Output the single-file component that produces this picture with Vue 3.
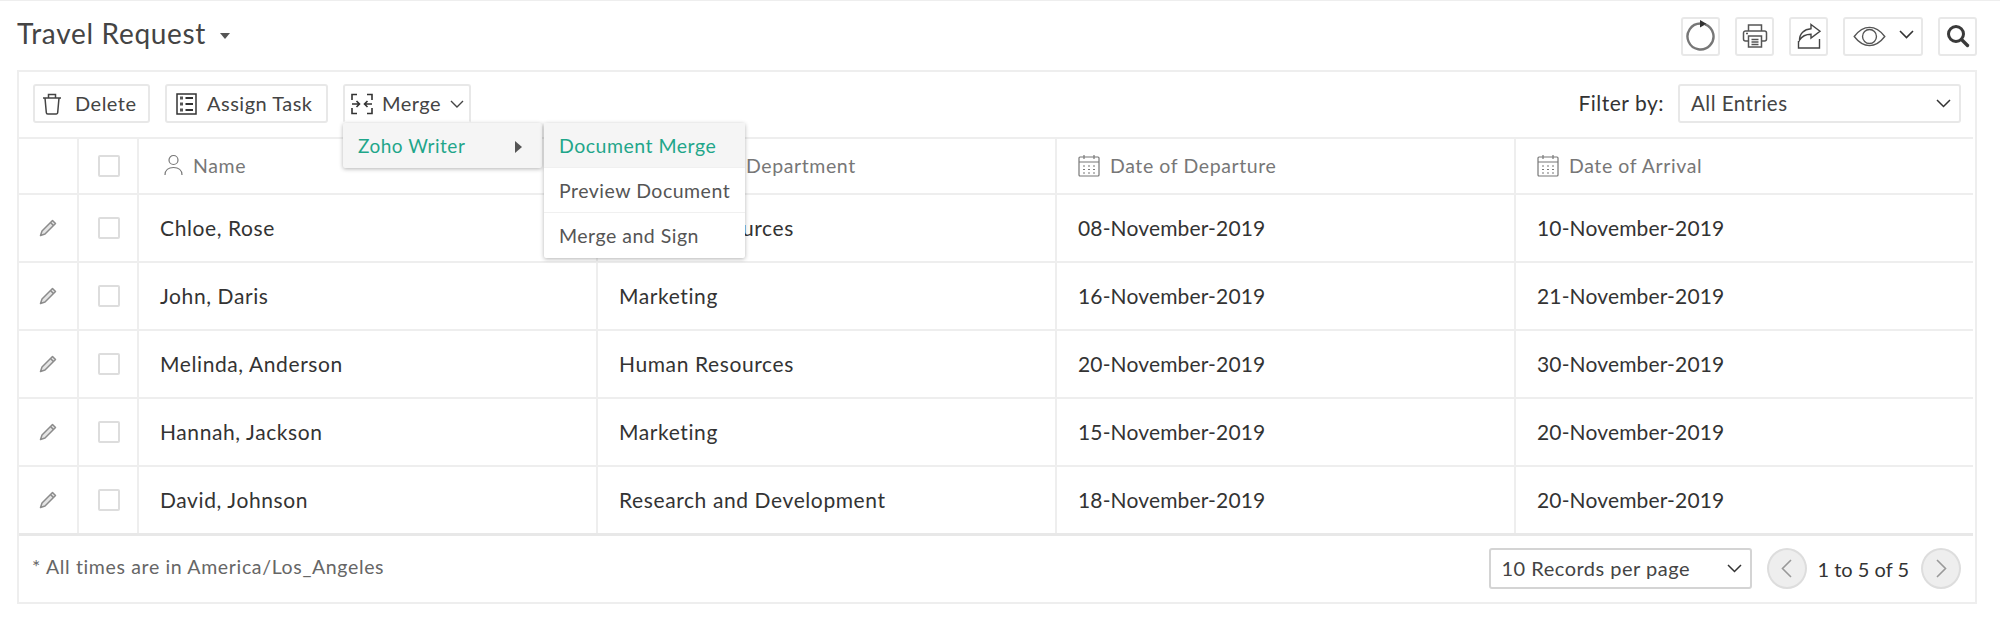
<template>
  <div class="page">
    <header class="topbar">
      <div class="title">
        <span>Travel Request</span>
        <i class="caret"></i>
      </div>
      <div class="top-actions">
        <button class="icon-btn">
          <svg width="32" height="32" viewBox="0 0 32 32" fill="none">
            <path d="M20 4.300A13 13 0 1 1 15.500 3.500" stroke="#777" stroke-width="2.400" />
            <path d="M15 0l6.500 3.700L15 7.400z" fill="#333" />
          </svg>
        </button>
        <button class="icon-btn">
          <svg width="26" height="26" viewBox="0 0 26 26" fill="none" stroke="#555" stroke-width="1.500">
            <path d="M6.500 8V2h13v6" />
            <path d="M6 18H3.500a2 2 0 0 1-2-2v-6a2 2 0 0 1 2-2h19a2 2 0 0 1 2 2v6a2 2 0 0 1-2 2H20" />
            <path d="M6.500 13h13v11h-13z" />
            <path d="M9.500 16.500h7M9.500 19h7M9.500 21.500h7" />
            <path d="M4 10.500h2" />
          </svg>
        </button>
        <button class="icon-btn">
          <svg width="26" height="26" viewBox="0 0 26 26" fill="none" stroke="#444" stroke-width="1.400">
            <path d="M15 1.500l9 6.800-9 6.700v-3.800c-5 0-9 1.800-11.500 6 0-6.500 4.500-11 11.500-11.500z" />
            <path d="M2.500 18v7h21v-9" />
          </svg>
        </button>
        <button class="icon-btn eye-btn">
          <svg width="33" height="21" viewBox="0 0 34 22" fill="none" stroke="#555" stroke-width="1.400">
            <path d="M1 11C6 4.500 11 1.500 17 1.500S28 4.500 33 11C28 17.500 23 20.500 17 20.500S6 17.500 1 11z" />
            <circle cx="17" cy="11" r="7.300" />
          </svg>
          <svg class="chev" width="15" height="9" viewBox="0 0 15 9" fill="none" stroke="#333" stroke-width="1.600">
            <path d="M1 1l6.500 6.500L14 1" />
          </svg>
        </button>
        <button class="icon-btn search-btn">
          <svg width="24" height="24" viewBox="0 0 24 24" fill="none" stroke="#3a3a3a">
            <circle cx="10" cy="10" r="7.500" stroke-width="3" />
            <path d="M15.500 15.500l6 6" stroke-width="3.400" stroke-linecap="round" />
          </svg>
        </button>
      </div>
    </header>

    <section class="panel">
      <div class="toolbar">
        <button class="btn delete-btn">
          <svg width="20" height="22" viewBox="0 0 20 22" fill="none" stroke="#444" stroke-width="1.500">
            <path d="M1 5h18M6.500 4.500V1.500h7v3" />
            <path d="M3 5l1.300 14.500A1.500 1.500 0 0 0 5.800 21h8.400a1.500 1.500 0 0 0 1.500-1.500L17 5" />
          </svg>
          <span>Delete</span>
        </button>
        <button class="btn assign-btn">
          <svg width="21" height="22" viewBox="0 0 21 22" fill="none" stroke="#333" stroke-width="1.500">
            <rect x="1" y="1" width="19" height="20" />
            <path d="M4 5h3M4 11h3M4 17h3" stroke-width="3" stroke="#555" />
            <path d="M9.500 5H17M9.500 11H17M9.500 17H17" stroke-width="1.800" />
          </svg>
          <span>Assign Task</span>
        </button>
        <div class="merge-wrap">
          <button class="btn merge-btn">
            <svg width="22" height="22" viewBox="0 0 22 22" fill="none" stroke="#333" stroke-width="1.600">
              <path d="M1 7V1.500h5M16 1.500h5V7M1 15v5.500h5M16 20.500h5V15" />
              <path d="M1 11h7M5.500 8l3 3-3 3M21 11h-7M16.500 8l-3 3 3 3" />
            </svg>
            <span>Merge</span>
            <svg width="14" height="8" viewBox="0 0 14 8" fill="none" stroke="#444" stroke-width="1.400">
              <path d="M1 1l6 6 6-6" />
            </svg>
          </button>
          <div class="menu menu-main">
            <div class="menu-item active-parent">
              <span>Zoho Writer</span>
              <i class="arrow-right"></i>
            </div>
          </div>
          <ul class="menu menu-sub">
            <li v-for="(item, i) in mergeItems" :key="item" :class="{ current: i === 0 }">{{ item }}</li>
          </ul>
        </div>
        <div class="filter">
          <label>Filter by:</label>
          <div class="select filter-select">
            <span>All Entries</span>
            <svg width="15" height="9" viewBox="0 0 15 9" fill="none" stroke="#333" stroke-width="1.500">
              <path d="M1 1l6.500 6.500L14 1" />
            </svg>
          </div>
        </div>
      </div>

      <div class="table">
        <div class="row head">
          <div class="cell"></div>
          <div class="cell check"><i class="box"></i></div>
          <div class="cell col">
            <svg width="19" height="22" viewBox="0 0 19 22" fill="none" stroke="#777" stroke-width="1.200">
              <circle cx="9.500" cy="6" r="4.500" />
              <path d="M1 21c0-5 3.500-7.500 8.500-7.500S18 16 18 21" />
            </svg>
            <span>Name</span>
          </div>
          <div class="cell col dept"><span>Department</span></div>
          <div class="cell col" v-for="d in dateCols" :key="d">
            <svg width="22" height="23" viewBox="0 0 22 23" fill="none" stroke="#777" stroke-width="1.200">
              <rect x="1" y="3" width="20" height="19" rx="1" />
              <path d="M1 8h20M6 1v4M16 1v4" />
              <path d="M5 12h2M10 12h2M15 12h2M5 15.500h2M10 15.500h2M15 15.500h2M5 19h2M10 19h2M15 19h2" />
            </svg>
            <span>{{ d }}</span>
          </div>
        </div>
        <div class="row" v-for="r in rows" :key="r.name">
          <div class="cell edit">
            <svg width="18" height="18" viewBox="0 0 18 18" fill="#e4e4e4" stroke="#8c8c8c" stroke-width="1.500" stroke-linejoin="round">
              <path d="M13.500 1.500l3 3L6 15l-4.500 1.500L3 12z" />
              <path d="M11.500 3.500l3 3" fill="none" />
            </svg>
          </div>
          <div class="cell check"><i class="box"></i></div>
          <div class="cell">{{ r.name }}</div>
          <div class="cell">{{ r.dept }}</div>
          <div class="cell date">{{ r.from }}</div>
          <div class="cell date">{{ r.to }}</div>
        </div>
      </div>

      <footer class="foot">
        <span class="note">* All times are in America/Los_Angeles</span>
        <div class="pager">
          <div class="select per-page">
            <span>10 Records per page</span>
            <svg width="15" height="9" viewBox="0 0 15 9" fill="none" stroke="#333" stroke-width="1.500">
              <path d="M1 1l6.500 6.500L14 1" />
            </svg>
          </div>
          <button class="round">
            <svg width="11" height="19" viewBox="0 0 11 19" fill="none" stroke="#999" stroke-width="1.600">
              <path d="M10 1L1.500 9.500 10 18" />
            </svg>
          </button>
          <span class="count">1 to 5 of 5</span>
          <button class="round">
            <svg width="11" height="19" viewBox="0 0 11 19" fill="none" stroke="#999" stroke-width="1.600">
              <path d="M1 1l8.500 8.500L1 18" />
            </svg>
          </button>
        </div>
      </footer>
    </section>
  </div>
</template>

<script setup>
const mergeItems = ['Document Merge', 'Preview Document', 'Merge and Sign'];
const dateCols = ['Date of Departure', 'Date of Arrival'];

const rows = [
  { name: 'Chloe, Rose', dept: 'Human Resources', from: '08-November-2019', to: '10-November-2019' },
  { name: 'John, Daris', dept: 'Marketing', from: '16-November-2019', to: '21-November-2019' },
  { name: 'Melinda, Anderson', dept: 'Human Resources', from: '20-November-2019', to: '30-November-2019' },
  { name: 'Hannah, Jackson', dept: 'Marketing', from: '15-November-2019', to: '20-November-2019' },
  { name: 'David, Johnson', dept: 'Research and Development', from: '18-November-2019', to: '20-November-2019' }
];
</script>

<style>
html,
body {
  margin: 0;
  background: #fff;
}
</style>

<style scoped>
.page {
  width: 2000px;
  height: 628px;
  box-sizing: border-box;
  border-top: 1px solid #eee;
  padding: 0 23px 0 17px;
  font-family: Lato, "Liberation Sans", sans-serif;
  color: #333;
  overflow: hidden;
}

button {
  font: inherit;
  color: inherit;
  background: #fff;
  margin: 0;
  padding: 0;
  box-sizing: border-box;
}

.topbar {
  height: 69px;
  display: flex;
  align-items: center;
  justify-content: space-between;
}

.title {
  display: flex;
  align-items: center;
  gap: 14px;
  font-size: 28px;
  letter-spacing: 0.7px;
  color: #444;
  margin-top: -5px;
}

.caret {
  width: 0;
  height: 0;
  border: 5px solid transparent;
  border-top: 6px solid #555;
  border-bottom: 0;
  margin-top: 6px;
}

.top-actions {
  display: flex;
  gap: 15px;
  margin-top: 1px;
}

.icon-btn {
  width: 39px;
  height: 39px;
  border: 2px solid #e8e8e8;
  border-radius: 3px;
  display: flex;
  align-items: center;
  justify-content: center;
}

.eye-btn {
  width: 80px;
  gap: 13px;
}

.chev {
  margin-bottom: 3px;
}

.panel {
  height: 534px;
  box-sizing: border-box;
  border: 2px solid #eee;
}

.toolbar {
  height: 65px;
  box-sizing: border-box;
  padding: 12px 14px 0 14px;
  display: flex;
  gap: 15px;
}

.btn {
  height: 39px;
  border: 2px solid #e8e8e8;
  border-radius: 3px;
  display: flex;
  align-items: center;
  font-size: 20px;
  letter-spacing: 0.5px;
  color: #444;
}

.btn span,
.select span,
.filter label {
  margin-top: -2px;
}

.delete-btn {
  width: 117px;
  gap: 13px;
  padding-left: 7px;
}

.assign-btn {
  width: 163px;
  gap: 10px;
  padding-left: 9px;
}

.merge-wrap {
  position: relative;
}

.merge-btn {
  width: 128px;
  gap: 9px;
  padding-left: 6px;
  border-bottom-color: #fff;
}

.menu {
  position: absolute;
  top: 39px;
  margin: 0;
  padding: 0;
  list-style: none;
  background: #fff;
  border-radius: 2px;
  box-shadow: 0 1px 4px rgba(0, 0, 0, 0.3);
  font-size: 19.500px;
  letter-spacing: 0.5px;
  color: #555;
  z-index: 2;
}

.menu-main {
  left: 0;
  width: 199px;
  height: 45px;
  background: #f5f5f5;
  font-size: 19px;
}

.menu-item {
  height: 45px;
  display: flex;
  align-items: center;
  justify-content: space-between;
  padding: 0 20px 0 15px;
}

.active-parent {
  color: #1fa68a;
}

.arrow-right {
  width: 0;
  height: 0;
  border: 6px solid transparent;
  border-left: 7px solid #555;
  border-right: 0;
  margin-top: 3px;
}

.menu-sub {
  left: 201px;
  width: 201px;
}

.menu-sub li {
  height: 45px;
  box-sizing: border-box;
  padding-left: 15px;
  display: flex;
  align-items: center;
  border-bottom: 1px solid #f0f0f0;
}

.menu-sub li:last-child {
  border-bottom: 0;
}

.menu-sub .current {
  background: #f5f5f5;
  color: #1fa68a;
}

.filter {
  margin-left: auto;
  display: flex;
  align-items: center;
  height: 39px;
  gap: 14px;
}

.filter label {
  font-size: 21px;
  letter-spacing: 0.5px;
  color: #333;
}

.select {
  height: 39px;
  box-sizing: border-box;
  border: 2px solid #e8e8e8;
  border-radius: 3px;
  display: flex;
  align-items: center;
  justify-content: space-between;
  font-size: 20.500px;
  letter-spacing: 0.5px;
  color: #444;
  padding: 0 8px 0 11px;
}

.filter-select {
  width: 283px;
}

.table {
  margin-right: 2px;
  border-top: 2px solid #eee;
  border-bottom: 3px solid #e8e8e8;
}

.row {
  display: grid;
  grid-template-columns: 60px 60px 459px 459px 459px 1fr;
  height: 68px;
  box-sizing: border-box;
  border-bottom: 2px solid #eee;
  font-size: 21px;
  letter-spacing: 0.6px;
  color: #333;
}

.row:last-child {
  border-bottom: 0;
  height: 66px;
}

.row.head {
  height: 56px;
  font-size: 19.500px;
  color: #777;
}

.cell {
  display: flex;
  align-items: center;
  box-sizing: border-box;
  padding-left: 21px;
  padding-bottom: 2px;
  border-right: 2px solid #eee;
}

.cell:last-child {
  border-right: 0;
}

.date {
  letter-spacing: 0.150px;
}

.head .cell:nth-child(3) {
  padding-left: 25px;
}

.col {
  gap: 10px;
}

.head .dept {
  padding-left: 148px;
}

.check {
  padding-left: 19px;
  padding-bottom: 0;
}

.edit {
  padding-left: 20px;
  padding-bottom: 0;
}

.box {
  width: 22px;
  height: 22px;
  box-sizing: border-box;
  border: 2px solid #ddd;
  border-radius: 2px;
}

.foot {
  display: flex;
  align-items: center;
  justify-content: space-between;
  height: 64px;
  padding: 0 14px 0 13px;
}

.note {
  font-size: 19.500px;
  letter-spacing: 0.65px;
  color: #666;
  margin-top: -3px;
}

.pager {
  display: flex;
  align-items: center;
  margin-top: 1px;
}

.per-page {
  width: 263px;
  height: 41px;
  border-color: #d4d4d4;
  margin-right: 15px;
  font-size: 20px;
}

.count {
  font-size: 20px;
  letter-spacing: 0;
  margin: 0 12px 0 11px;
  color: #333;
}

.round {
  width: 40px;
  height: 41px;
  border-radius: 50%;
  border: 2px solid #ddd;
  background: #eee;
  display: flex;
  align-items: center;
  justify-content: center;
}
</style>
